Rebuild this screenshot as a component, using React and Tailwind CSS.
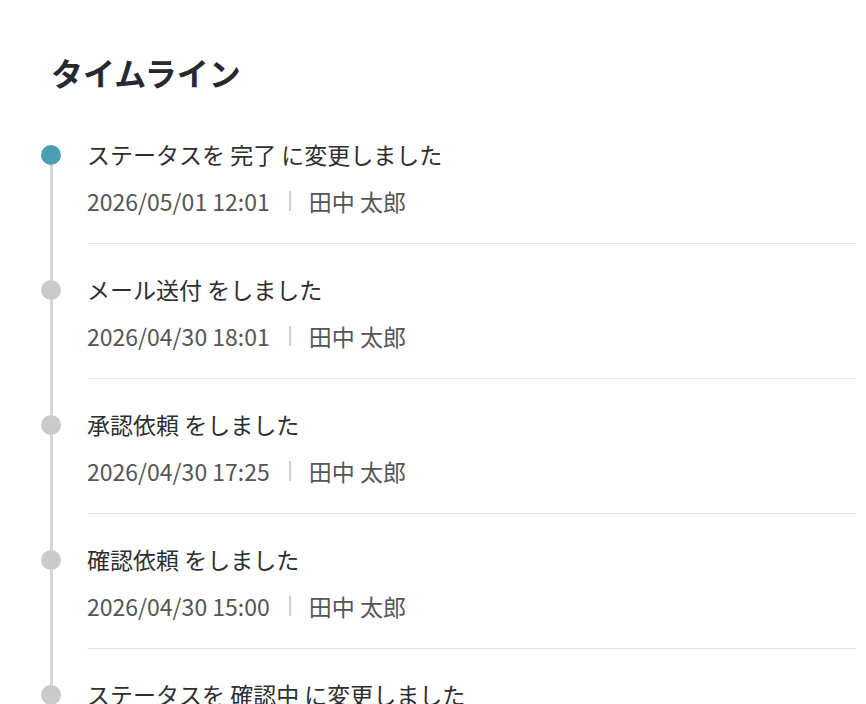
const events = [
  { title: "ステータスを 完了 に変更しました", at: "2026/05/01 12:01", user: "田中 太郎", current: true },
  { title: "メール送付 をしました", at: "2026/04/30 18:01", user: "田中 太郎" },
  { title: "承認依頼 をしました", at: "2026/04/30 17:25", user: "田中 太郎" },
  { title: "確認依頼 をしました", at: "2026/04/30 15:00", user: "田中 太郎" },
  { title: "ステータスを 確認中 に変更しました", at: "2026/04/30 14:12", user: "田中 太郎" },
  { title: "下書き を保存しました", at: "2026/04/30 13:40", user: "田中 太郎" },
];

// One entry: rail column (connector + dot) and the text block with its divider.
function TimelineItem({ item, first }) {
  return (
    <li className="flex">
      <div className="flex w-[20px] shrink-0 flex-col items-center">
        <div className={`h-[36px] w-[3px] ${first ? "bg-transparent" : "bg-[#d6d6d6]"}`} />
        <div
          className={`h-5 w-5 shrink-0 rounded-full ${
            item.current ? "bg-[#4a9fb4]" : "bg-[#cacaca]"
          }`}
        />
        <div className="w-[3px] flex-1 bg-[#d6d6d6]" />
      </div>
      <div className="ml-[26px] flex-1 border-b border-[#e6e6e6] pb-[25px] pt-[28px]">
        <p className="whitespace-nowrap text-[23px] leading-[34px] text-[#2e2e2e]">{item.title}</p>
        <div className="mt-[13px] flex items-center whitespace-nowrap text-[23px] leading-[34px] text-[#555]">
          <span>{item.at}</span>
          <span className="ml-[19px] mr-[18px] h-[20px] w-[2px] bg-[#d0d0d0]" />
          <span>{item.user}</span>
        </div>
      </div>
    </li>
  );
}

export default function App() {
  return (
    <div
      className="h-[704px] overflow-hidden bg-white pl-[41px] pr-[10px] pt-[48px]"
      style={{ fontFamily: '"Noto Sans CJK JP", "Noto Sans", sans-serif' }}
    >
      <h1 className="mb-[13px] pl-[10px] text-[32px] font-bold leading-[48px] text-[#26292d]">
        タイムライン
      </h1>
      <ul>
        {events.map((item, i) => (
          <TimelineItem key={i} item={item} first={i === 0} />
        ))}
      </ul>
    </div>
  );
}
